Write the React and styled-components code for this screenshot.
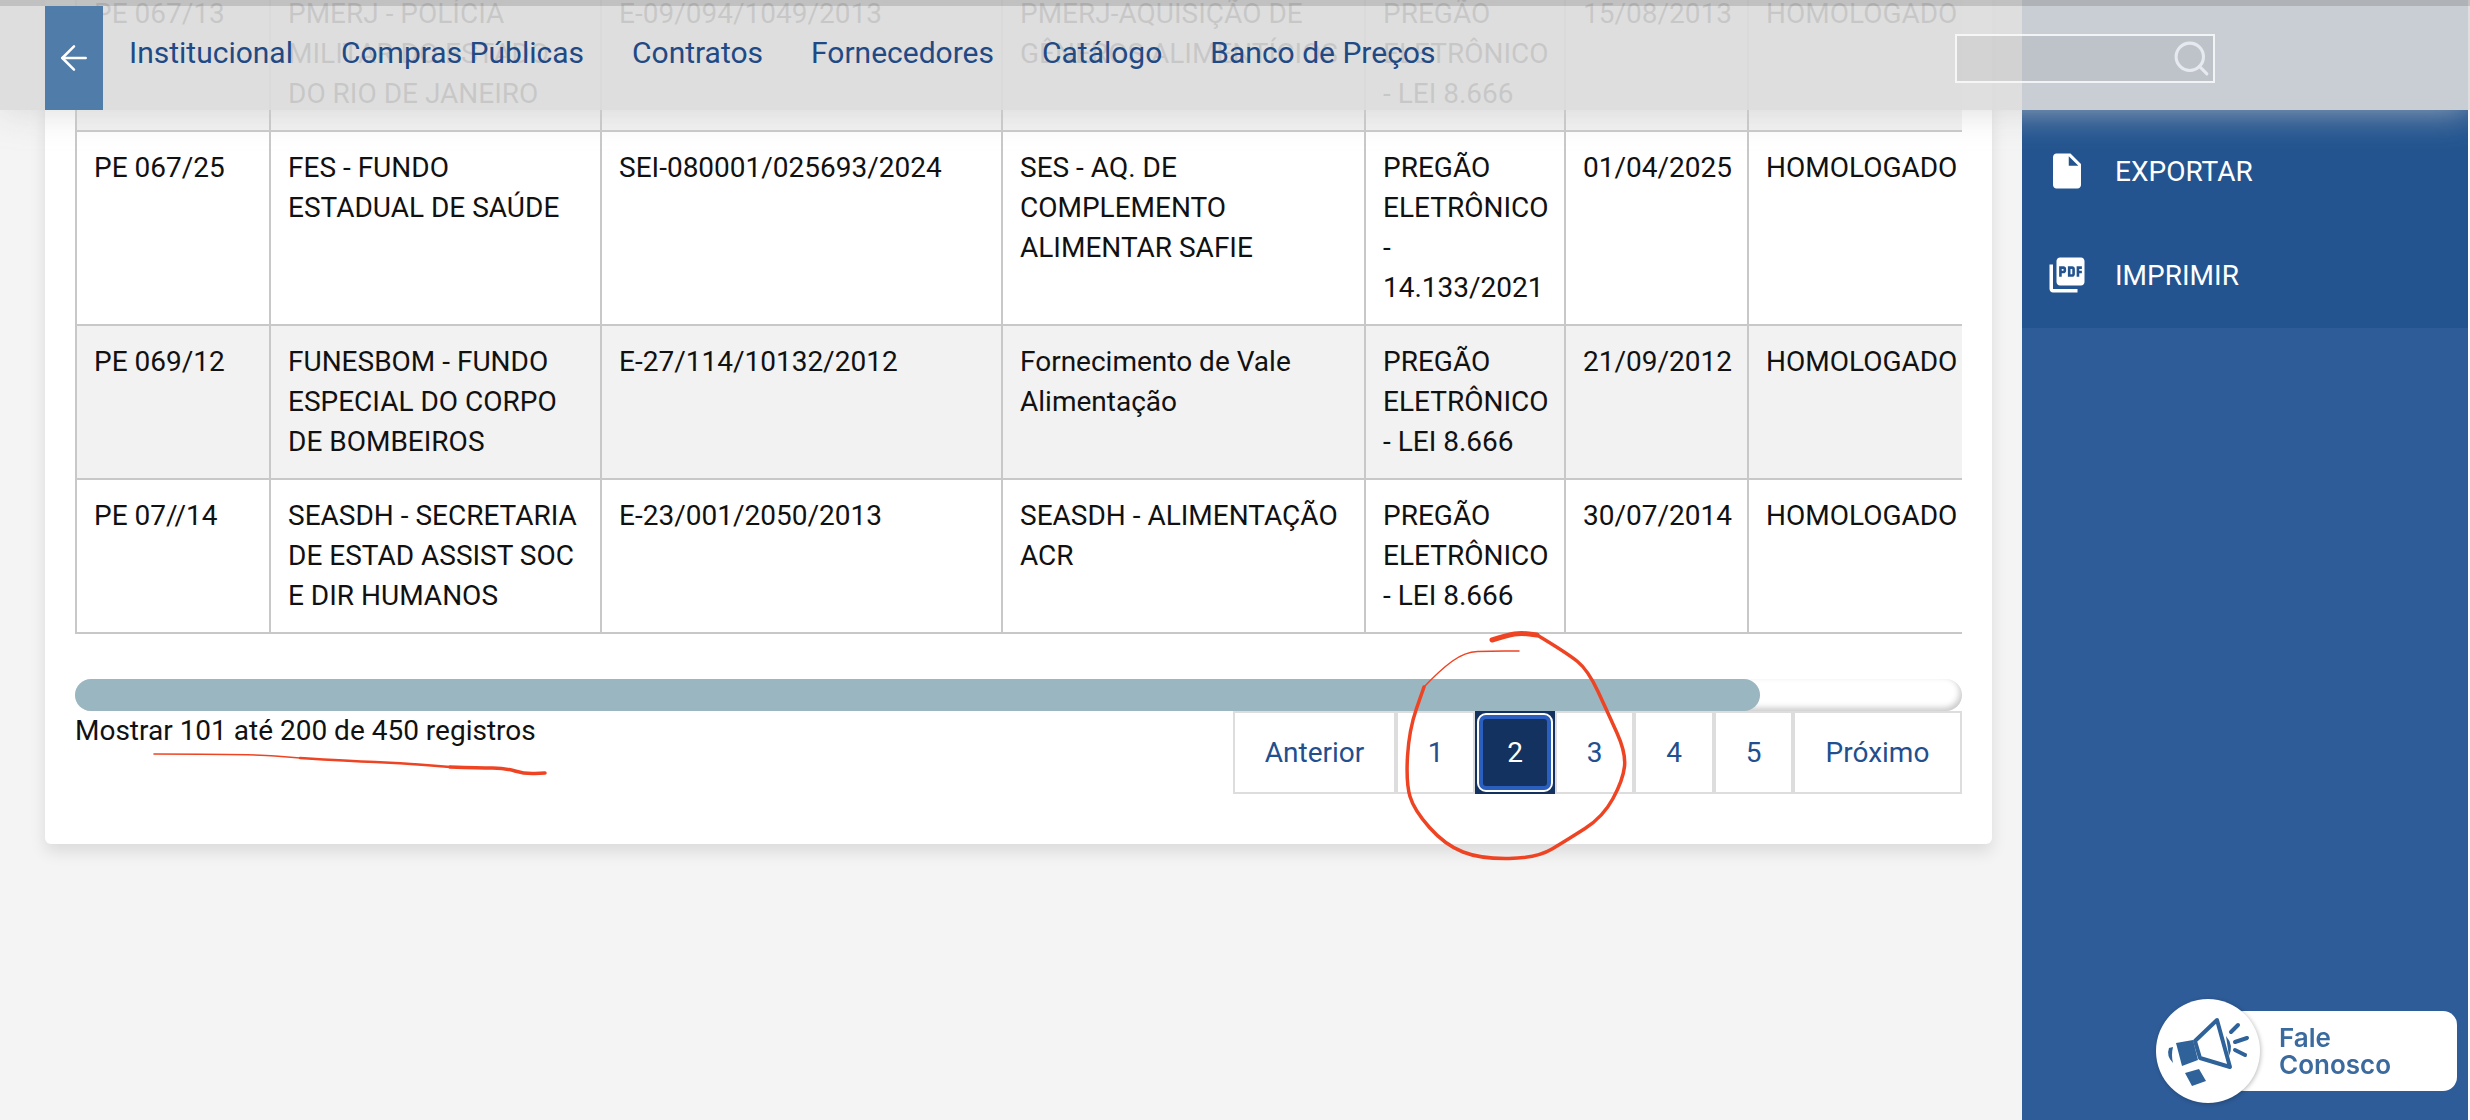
import styled, { createGlobalStyle } from "styled-components"
import { ArrowLeft, Search } from "lucide-react"
import { MdInsertDriveFile, MdPictureAsPdf } from "react-icons/md"

const GlobalStyle = createGlobalStyle`
  html, body {
    margin: 0;
    padding: 0;
    background: #fff;
    font-family: Roboto, "Liberation Sans", sans-serif;
  }
`

const Page = styled.div`
  position: relative;
  display: flex;
  width: 2470px;
  height: 1120px;
  overflow: hidden;
`

const Main = styled.main`
  width: 2022px;
  box-sizing: border-box;
  padding-left: 45px;
  background: #f4f4f4;
`

const Card = styled.section`
  width: 1947px;
  box-sizing: border-box;
  margin-top: -24px;
  padding: 0 30px 50px 30px;
  background: #fff;
  border-radius: 6px;
  box-shadow: 0 8px 16px rgba(0, 0, 0, 0.1);
`

const TableClip = styled.div`
  overflow: hidden;
`

const Table = styled.table`
  width: 1912px;
  table-layout: fixed;
  border-collapse: collapse;
  font-size: 28px;
  line-height: 40px;
  color: #111;
`

const Row = styled.tr`
  background: ${(props) => (props.$striped ? "#f2f2f2" : "#fff")};
`

const Cell = styled.td`
  box-sizing: border-box;
  padding: 16px 12px 16px 17px;
  border: 2px solid #c8c8c8;
  vertical-align: top;
`

const Scrollbar = styled.div`
  height: 32px;
  margin-top: 45px;
  background: #fff;
  border-radius: 16px;
  box-shadow: inset -2px -3px 6px rgba(0, 0, 0, 0.22);
`

const ScrollThumb = styled.div`
  width: 1685px;
  height: 100%;
  background: #9ab6c1;
  border-radius: 16px;
`

const Footer = styled.div`
  display: flex;
  justify-content: space-between;
`

const Summary = styled.div`
  font-size: 28px;
  line-height: 40px;
  color: #111;
`

const Pagination = styled.div`
  display: flex;
`

const PageButton = styled.div`
  position: relative;
  display: flex;
  align-items: center;
  justify-content: center;
  box-sizing: border-box;
  width: ${(props) => props.$width}px;
  height: 83px;
  font-size: 28px;
  color: ${(props) => (props.$active ? "#fff" : "#234f8e")};
  background: ${(props) => (props.$active ? "#14325f" : "#fff")};
  border: ${(props) => (props.$active ? "none" : "2px solid #dddddd")};

  ${(props) =>
    props.$active &&
    `
    &::before {
      content: '';
      position: absolute;
      inset: 2px;
      border: 2px solid #fff;
      border-radius: 9px;
      box-shadow: inset 0 0 0 4px #2a5fc0;
    }
    & > span {
      position: relative;
    }
  `}
`

const Sidebar = styled.aside`
  position: relative;
  width: 446px;
  background: #2e5c98;
`

const ExportPanel = styled.div`
  box-sizing: border-box;
  height: 328px;
  padding: 119px 0 0 24px;
  background: #23548f;
`

const ExportItem = styled.div`
  display: flex;
  align-items: center;
  gap: 27px;
  height: 104px;
  font-size: 28px;
  color: #fff;
`

const FaleWidget = styled.div`
  position: absolute;
  left: 134px;
  top: 999px;
  width: 301px;
  height: 104px;
  filter: blur(0.5px);
`

const FalePill = styled.div`
  position: absolute;
  left: 74px;
  top: 12px;
  right: 0;
  height: 80px;
  box-sizing: border-box;
  padding-left: 49px;
  padding-top: 13px;
  background: #fff;
  border-radius: 14px;
  font-family: Inter, sans-serif;
  font-weight: 600;
  font-size: 26px;
  line-height: 27px;
  color: #3a6a9e;
`

const FaleCircle = styled.div`
  position: absolute;
  left: 0;
  top: 0;
  width: 104px;
  height: 104px;
  background: #fff;
  border-radius: 50%;
  box-shadow: 1px 1px 4px rgba(0, 0, 0, 0.25);

  svg {
    display: block;
  }
`

const TopBar = styled.nav`
  position: absolute;
  top: 0;
  left: 0;
  right: 0;
  height: 110px;
  display: flex;
  align-items: stretch;
  padding-left: 45px;
  box-sizing: border-box;
  background: rgba(220, 220, 220, 0.9);
  box-shadow: 0 0 34px rgba(205, 205, 205, 0.75);

  &::before {
    content: '';
    position: absolute;
    top: 0;
    left: 0;
    right: 0;
    height: 6px;
    background: rgba(0, 0, 0, 0.13);
  }
`

const BackButton = styled.div`
  display: flex;
  align-items: center;
  justify-content: center;
  width: 58px;
  margin-top: 6px;
  background: #4f7ca9;
  color: #fff;
`

const NavLinks = styled.div`
  display: flex;
  align-items: center;
  gap: 48px;
  margin-left: 26px;
  padding-bottom: 6px;
  font-size: 30px;
  color: #1f4a85;
`

const SearchBox = styled.div`
  position: absolute;
  left: 1955px;
  top: 34px;
  width: 260px;
  height: 49px;
  box-sizing: border-box;
  display: flex;
  align-items: center;
  justify-content: flex-end;
  padding-right: 1px;
  border: 2px solid rgba(255, 255, 255, 0.8);
  background: rgba(0, 0, 0, 0.05);
  color: #e6eaf0;
`

const Annotations = styled.svg`
  position: absolute;
  top: 0;
  left: 0;
  pointer-events: none;
  fill: none;
  stroke: #ee4423;
  stroke-linecap: round;
  stroke-linejoin: round;
`

const rows = [
  ["PE 067/13", "PMERJ - POLÍCIA MILITAR DO ESTADO DO RIO DE JANEIRO", "E-09/094/1049/2013", "PMERJ-AQUISIÇÃO DE GÊNEROS ALIMENTÍCIOS", "PREGÃO ELETRÔNICO - LEI 8.666", "15/08/2013", "HOMOLOGADO"],
  ["PE 067/25", "FES - FUNDO ESTADUAL DE SAÚDE", "SEI-080001/025693/2024", "SES - AQ. DE COMPLEMENTO ALIMENTAR SAFIE", "PREGÃO ELETRÔNICO - 14.133/2021", "01/04/2025", "HOMOLOGADO"],
  ["PE 069/12", "FUNESBOM - FUNDO ESPECIAL DO CORPO DE BOMBEIROS", "E-27/114/10132/2012", "Fornecimento de Vale Alimentação", "PREGÃO ELETRÔNICO - LEI 8.666", "21/09/2012", "HOMOLOGADO"],
  ["PE 07//14", "SEASDH - SECRETARIA DE ESTAD ASSIST SOC E DIR HUMANOS", "E-23/001/2050/2013", "SEASDH - ALIMENTAÇÃO ACR", "PREGÃO ELETRÔNICO - LEI 8.666", "30/07/2014", "HOMOLOGADO"],
]

const columns = [194, 331, 401, 363, 200, 183, 240]

const pages = [
  { label: "Anterior", width: 163 },
  { label: "1", width: 79 },
  { label: "2", width: 80, active: true },
  { label: "3", width: 79 },
  { label: "4", width: 80 },
  { label: "5", width: 79 },
  { label: "Próximo", width: 169 },
]

const navItems = ["Institucional", "Compras Públicas", "Contratos", "Fornecedores", "Catálogo", "Banco de Preços"]

// pen strokes drawn over the screenshot
const smooth = (pts) => {
  let d = `M${pts[0][0]} ${pts[0][1]}`
  for (let i = 1; i < pts.length - 1; i++) {
    const mx = (pts[i][0] + pts[i + 1][0]) / 2
    const my = (pts[i][1] + pts[i + 1][1]) / 2
    d += ` Q${pts[i][0]} ${pts[i][1]} ${mx} ${my}`
  }
  const last = pts[pts.length - 1]
  return d + ` L${last[0]} ${last[1]}`
}

const circleHead = [[1492, 640], [1508, 635], [1521, 633], [1537, 635]]
const circleBody = [[1537, 635], [1567, 653], [1588, 670], [1608, 713], [1626, 753], [1623, 780], [1603, 817], [1567, 840], [1537, 858], [1481, 859], [1445, 845], [1414, 810], [1406, 783], [1409, 730], [1424, 687]]
const circleTail = [[1424, 687], [1440, 670], [1465, 652], [1490, 651], [1519, 651]]
const underlineThin = [[154, 754], [250, 754], [300, 758]]
const underlineMid = [[300, 758], [350, 761], [400, 763], [450, 767]]
const underlineThick = [[450, 767], [480, 768], [505, 768], [525, 774], [545, 773]]

const Megaphone = () => (
  <svg width="104" height="104" viewBox="0 0 104 104">
    <g fill="#2f6299" stroke="none">
      <path d="M20 44 L37 41 L42 61 L26 67 Z" />
      <path d="M29 74 L43 70 L50 82 L36 87 Z" />
      <path d="M13 49 Q10 57 17 64 Q15 56 17 48 Z" />
      <path d="M70 37 Q78 46 73 57 Z" />
    </g>
    <g fill="none" stroke="#2f6299" strokeWidth="4" strokeLinecap="round" strokeLinejoin="round">
      <path d="M39 42 L61 21 L74 68 L44 59 Z" />
      <path d="M75 33 L82 26" />
      <path d="M79 43 L91 39" />
      <path d="M79 51 L89 56" />
    </g>
  </svg>
)

const App = () => {
  return (
    <Page>
      <GlobalStyle />
      <Main>
        <Card>
          <TableClip>
            <Table>
              <colgroup>
                {columns.map((width, index) => (
                  <col key={index} width={width} />
                ))}
              </colgroup>
              <tbody>
                {rows.map((row, index) => (
                  <Row key={row[0]} $striped={index % 2 === 0}>
                    {row.map((value, cellIndex) => (
                      <Cell key={cellIndex}>{value}</Cell>
                    ))}
                  </Row>
                ))}
              </tbody>
            </Table>
          </TableClip>
          <Scrollbar>
            <ScrollThumb />
          </Scrollbar>
          <Footer>
            <Summary>Mostrar 101 até 200 de 450 registros</Summary>
            <Pagination>
              {pages.map((page) => (
                <PageButton key={page.label} $width={page.width} $active={page.active}>
                  <span>{page.label}</span>
                </PageButton>
              ))}
            </Pagination>
          </Footer>
        </Card>
      </Main>

      <Sidebar>
        <ExportPanel>
          <ExportItem>
            <MdInsertDriveFile size={42} />
            EXPORTAR
          </ExportItem>
          <ExportItem>
            <MdPictureAsPdf size={42} />
            IMPRIMIR
          </ExportItem>
        </ExportPanel>
        <FaleWidget>
          <FalePill>
            Fale
            <br />
            Conosco
          </FalePill>
          <FaleCircle>
            <Megaphone />
          </FaleCircle>
        </FaleWidget>
      </Sidebar>

      <TopBar>
        <BackButton>
          <ArrowLeft size={40} strokeWidth={1.5} />
        </BackButton>
        <NavLinks>
          {navItems.map((item) => (
            <span key={item}>{item}</span>
          ))}
        </NavLinks>
        <SearchBox>
          <Search size={41} strokeWidth={1.8} />
        </SearchBox>
      </TopBar>

      <Annotations width="2470" height="1120" viewBox="0 0 2470 1120">
        <path d={smooth(circleHead)} strokeWidth="5" />
        <path d={smooth(circleBody)} strokeWidth="3.5" />
        <path d={smooth(circleTail)} strokeWidth="1.5" />
        <path d={smooth(underlineThin)} strokeWidth="1.6" />
        <path d={smooth(underlineMid)} strokeWidth="2.4" />
        <path d={smooth(underlineThick)} strokeWidth="3.5" />
      </Annotations>
    </Page>
  )
}

export default App
